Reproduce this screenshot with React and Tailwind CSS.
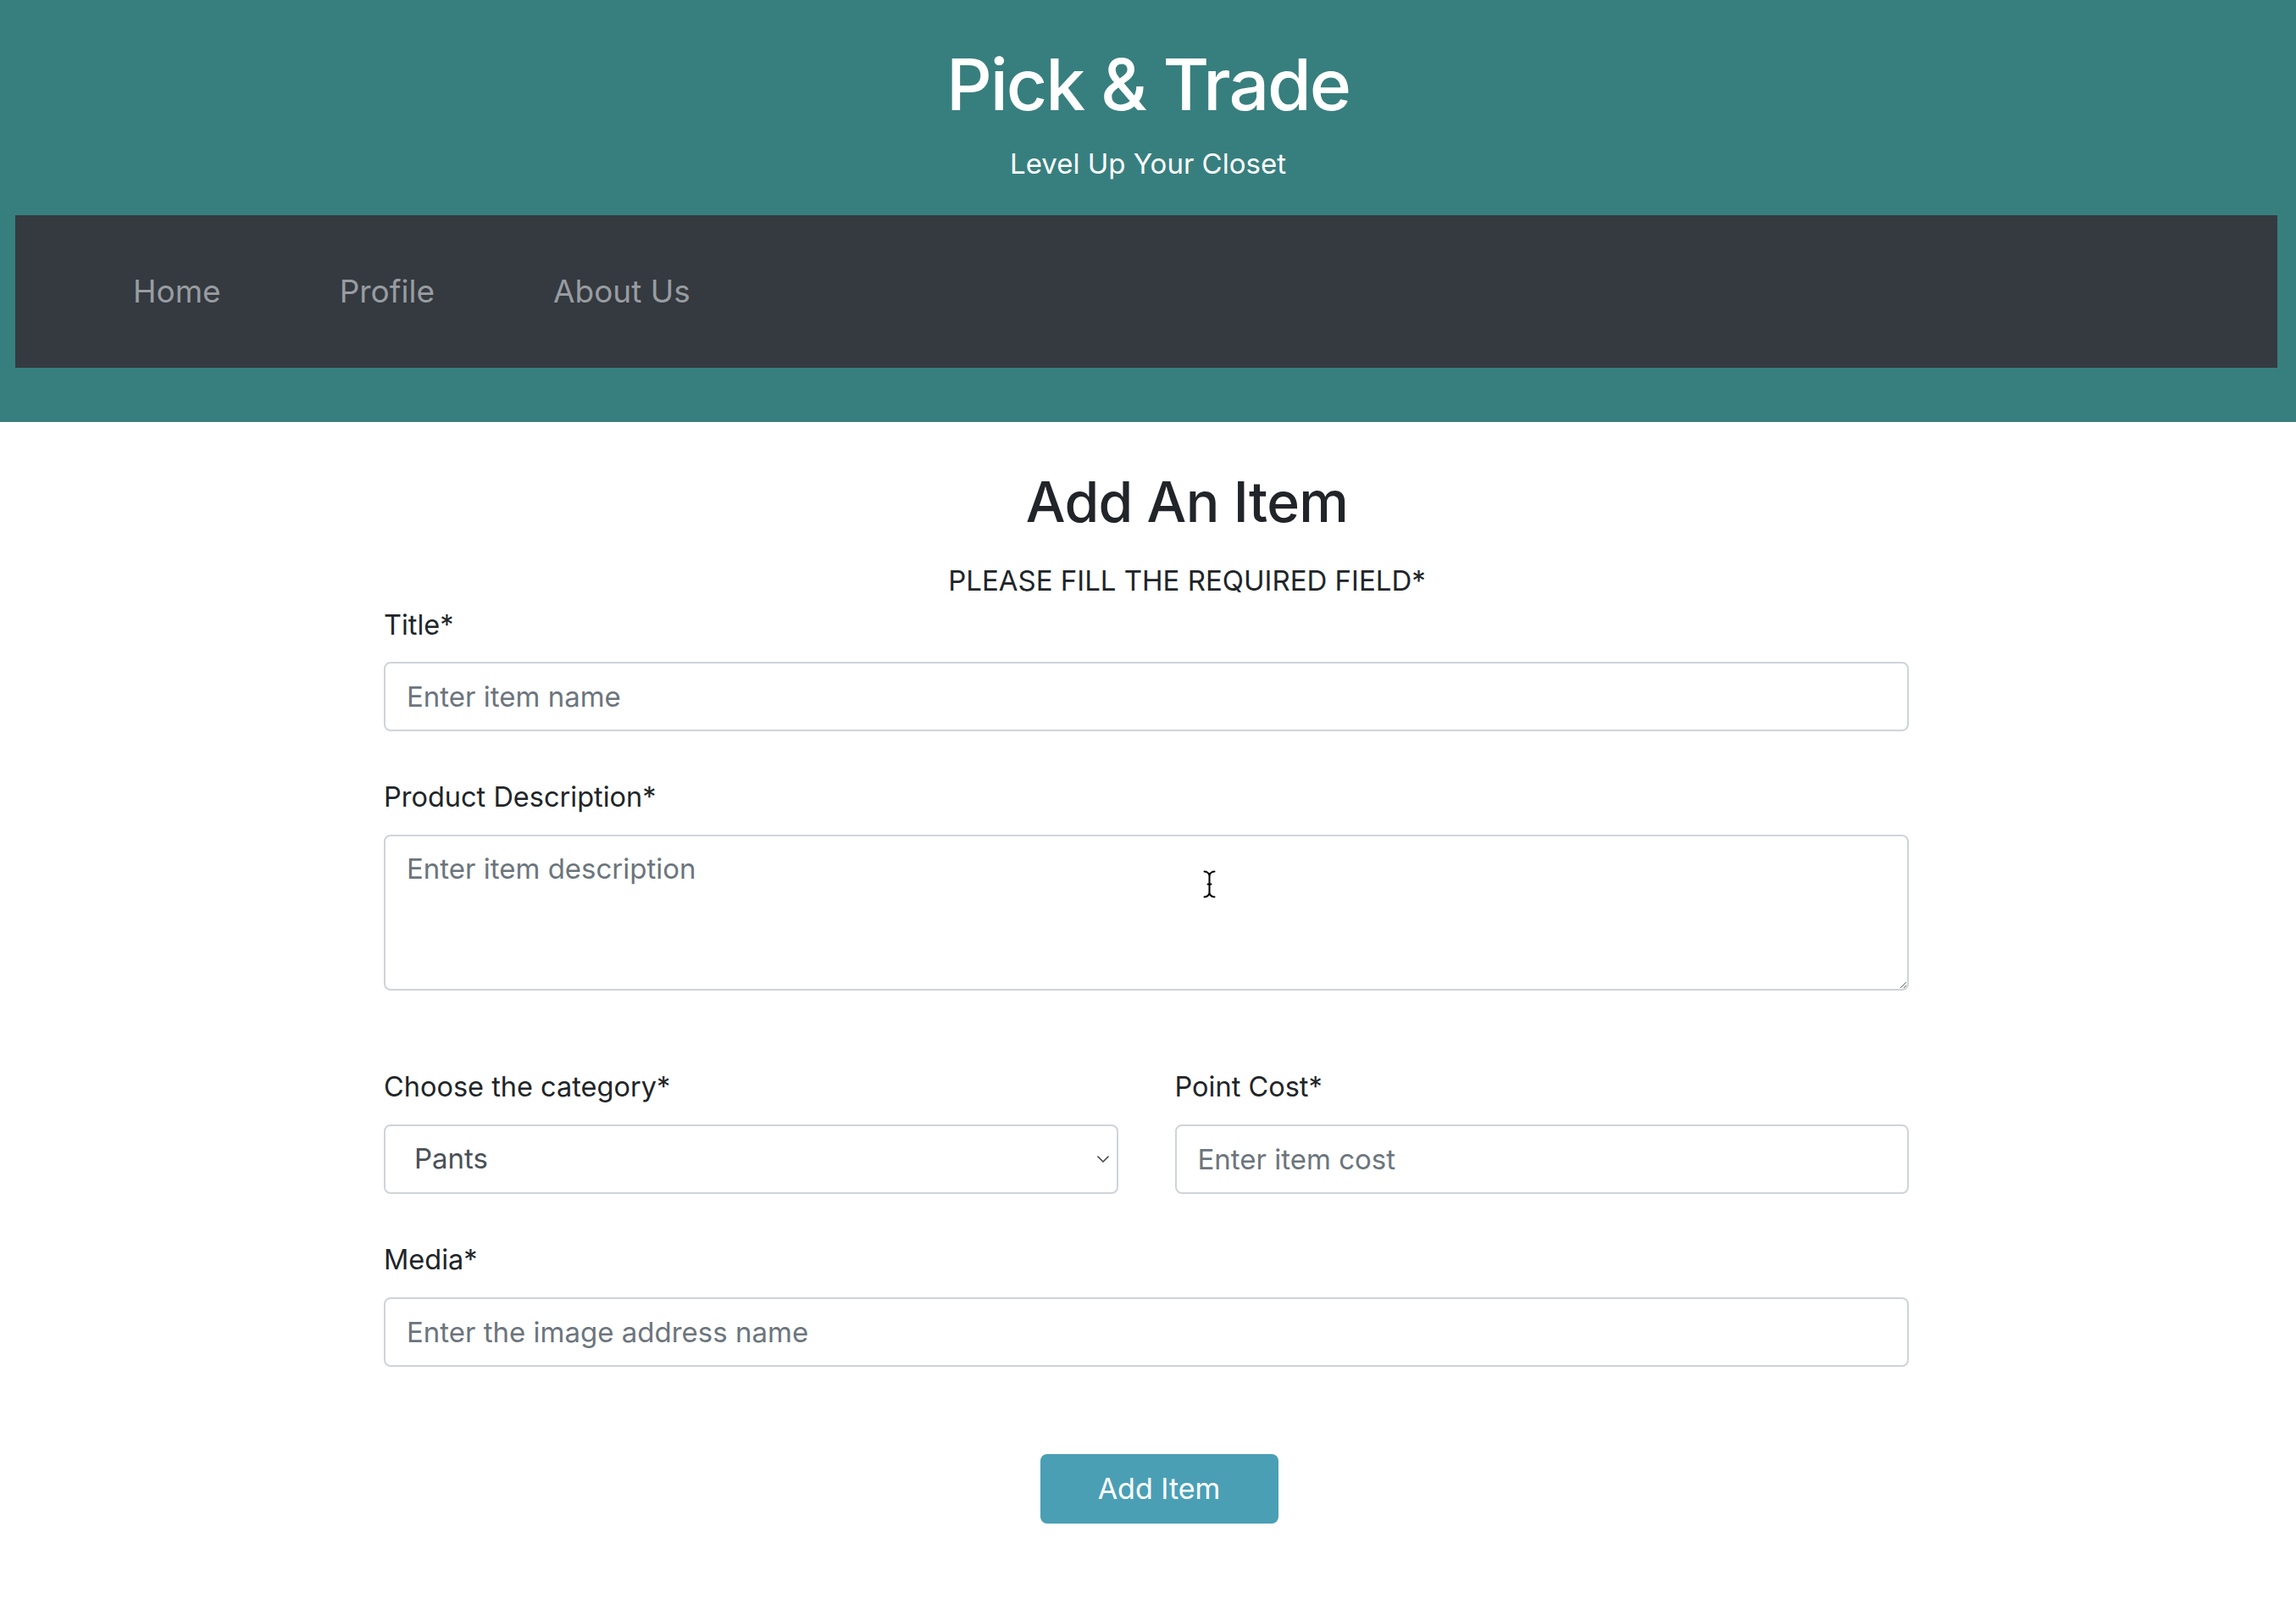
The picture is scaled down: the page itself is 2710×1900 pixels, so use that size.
import React from "react";

function Field({ label, children, className = "" }) {
  return (
    <div className={className}>
      <label className="block text-[32.5px] leading-[1.5] text-[#212529] mb-[19px]">{label}</label>
      {children}
    </div>
  );
}

const inputCls =
  "block w-full h-[82px] rounded-[8px] border-2 border-[#ced4da] bg-white px-[25px] text-[33px] leading-[1.5] text-[#495057] placeholder:text-[#6c757d] outline-none";

export default function App() {
  return (
    <div className="min-h-[1900px] bg-white font-['Inter',sans-serif]">
      {/* Site header with title and navigation bar */}
      <header className="bg-[#377f7e] pt-[50px] pb-[64px]">
        <h1 className="text-center text-[84px] leading-[1.2] font-medium text-white tracking-[-0.025em]">
          Pick &amp; Trade
        </h1>
        <p className="mt-[19px] text-center text-[33px] leading-[1.45] text-white">Level Up Your Closet</p>
        <nav className="mt-[36px] ml-[18px] mr-[22px] h-[180px] bg-[#343a40] flex items-center pl-[139px] gap-[140px]">
          <a className="text-[37px] text-[#999ca0]">Home</a>
          <a className="text-[37px] text-[#999ca0]">Profile</a>
          <a className="text-[37px] text-[#999ca0]">About Us</a>
        </nav>
      </header>

      <main className="w-[1800px] ml-[453px] pt-[55px] pb-[100px]">
        <div className="pl-[96px] text-center">
          <h2 className="text-[66px] leading-[1.2] font-medium text-[#212529] tracking-[-0.01em]">Add An Item</h2>
          <p className="mt-[30px] text-[33px] leading-[1.42] text-[#212529]">PLEASE FILL THE REQUIRED FIELD*</p>
        </div>

        <form className="mt-[5px]" onSubmit={(e) => e.preventDefault()}>
          <Field label="Title*">
            <input className={inputCls} placeholder="Enter item name" />
          </Field>

          <Field label="Product Description*" className="mt-[54px]">
            <div className="relative">
              <textarea
                className="block w-full h-[184px] rounded-[8px] border-2 border-[#ced4da] bg-white px-[25px] py-[14px] text-[33px] leading-[1.5] text-[#495057] placeholder:text-[#6c757d] outline-none"
                placeholder="Enter item description"
              />
              {/* text cursor hovering over the textarea */}
              <svg
                className="absolute left-[967px] top-[41px] pointer-events-none"
                width="15"
                height="35"
                viewBox="0 0 15 35"
                fill="none"
                stroke="#000"
                strokeWidth="2"
                strokeLinecap="round"
              >
                <path d="M1.5 2.5 Q5.5 2.5 7.5 6.5 Q9.5 2.5 13.5 2.5" />
                <path d="M7.5 6.5 V28.5" />
                <path d="M1.5 32.5 Q5.5 32.5 7.5 28.5 Q9.5 32.5 13.5 32.5" />
                <path d="M5.5 17.5 H9.5" />
              </svg>
            </div>
          </Field>

          <div className="mt-[90px] grid grid-cols-2 gap-x-[67px]">
            <Field label="Choose the category*">
              <div className="relative">
                <select
                  defaultValue="Pants"
                  className="block w-full h-[82px] appearance-none rounded-[8px] border-2 border-[#ced4da] bg-white pl-[34px] pr-[60px] text-[33px] leading-[1.5] text-[#495057] outline-none"
                >
                  <option>Shirts</option>
                  <option>Pants</option>
                  <option>Shoes</option>
                  <option>Accessories</option>
                </select>
                <svg
                  className="absolute right-[10px] top-[36px] pointer-events-none"
                  width="16"
                  height="10"
                  viewBox="0 0 16 10"
                  fill="none"
                  stroke="#3a3f44"
                  strokeWidth="1.5"
                >
                  <path d="M1.5 1.5 L8 8 L14.5 1.5" />
                </svg>
              </div>
            </Field>
            <Field label="Point Cost*">
              <input className={inputCls} placeholder="Enter item cost" />
            </Field>
          </div>

          <Field label="Media*" className="mt-[54px]">
            <input className={inputCls} placeholder="Enter the image address name" />
          </Field>

          <div className="mt-[103px] flex justify-center pl-[30px]">
            <button
              type="submit"
              className="h-[82px] w-[281px] rounded-[8px] bg-[#4a9fb5] text-[34px] text-white"
            >
              Add Item
            </button>
          </div>
        </form>
      </main>
    </div>
  );
}
